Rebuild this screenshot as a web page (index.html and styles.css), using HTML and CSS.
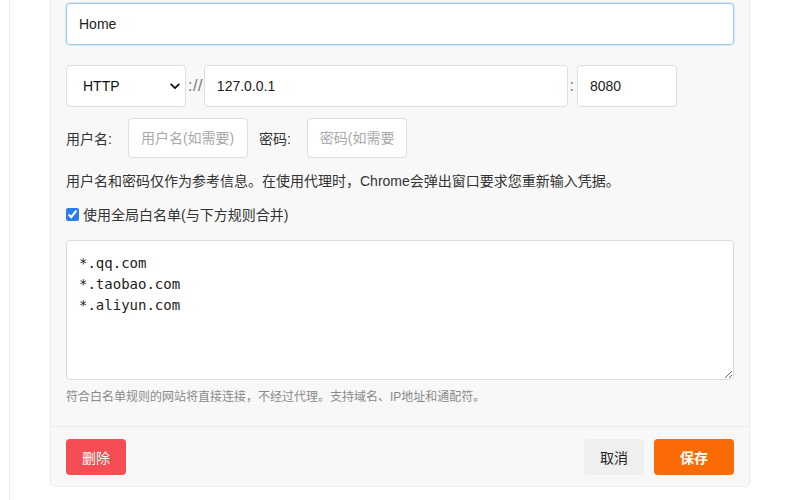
FILE: index.html
```html
<!DOCTYPE html>
<html lang="zh-CN">
<head>
<meta charset="utf-8">
<title>Proxy</title>
<link rel="stylesheet" href="styles.css">
</head>
<body>
<div class="page">
  <div class="panel">
    <div class="panel-body">
      <input class="input name-input" type="text" value="Home">

      <div class="row addr-row">
        <div class="select-wrap">
          <select class="select">
            <option>HTTP</option>
            <option>HTTPS</option>
            <option>SOCKS5</option>
          </select>
          <svg class="chevron" width="10" height="7" viewBox="0 0 10 7"><path d="M1.2 1.4 L5 5.2 L8.8 1.4" fill="none" stroke="#111" stroke-width="1.8" stroke-linecap="round" stroke-linejoin="round"/></svg>
        </div>
        <span class="sep sep-scheme">://</span>
        <input class="input host-input" type="text" value="127.0.0.1">
        <span class="sep sep-colon">:</span>
        <input class="input port-input" type="text" value="8080">
      </div>

      <div class="row auth-row">
        <label class="label user-label">用户名:</label>
        <input class="input user-input" type="text" placeholder="用户名(如需要)">
        <label class="label pass-label">密码:</label>
        <input class="input pass-input" type="password" placeholder="密码(如需要)">
      </div>

      <p class="helper">用户名和密码仅作为参考信息。在使用代理时，Chrome会弹出窗口要求您重新输入凭据。</p>

      <label class="check-row">
        <input class="check" type="checkbox" checked>
        <span>使用全局白名单(与下方规则合并)</span>
      </label>

      <textarea class="rules">*.qq.com
*.taobao.com
*.aliyun.com</textarea>

      <p class="hint">符合白名单规则的网站将直接连接，不经过代理。支持域名、IP地址和通配符。</p>
    </div>

    <div class="panel-footer">
      <button class="btn btn-danger">删除</button>
      <div class="footer-right">
        <button class="btn btn-cancel">取消</button>
        <button class="btn btn-save">保存</button>
      </div>
    </div>
  </div>
</div>
</body>
</html>
```

FILE: styles.css
```css
* { box-sizing: border-box; }

html, body {
  margin: 0;
  padding: 0;
  background: #ffffff;
  font-family: "Liberation Sans", "Noto Sans CJK SC", sans-serif;
  color: #333333;
  font-size: 14px;
}

.page {
  margin-left: 9px;
  border-left: 1px solid #ececec;
  height: 500px;
  padding-left: 40px;
}

.panel {
  width: 700px;
  background: #f8f8f8;
  border: 1px solid #ebebeb;
  border-top: none;
  border-radius: 0 0 5px 5px;
}

.panel-body {
  padding: 3px 15px 0 15px;
}

.input {
  display: block;
  font-family: "Liberation Sans", "Noto Sans CJK SC", sans-serif;
  font-size: 14px;
  color: #222;
  background: #fff;
  border: 1px solid #dedede;
  border-radius: 4px;
  padding: 0 12px;
  outline: none;
}

.input::placeholder { color: #a9a9a9; }

.name-input {
  width: 100%;
  height: 42px;
  border-color: #9ccdf1;
  box-shadow: 0 0 0 1px rgba(156, 205, 241, 0.4);
}

.row {
  display: flex;
  align-items: center;
}

.addr-row {
  margin-top: 20px;
  height: 42px;
}

.select-wrap {
  position: relative;
  width: 120px;
  height: 42px;
}

.select {
  appearance: none;
  -webkit-appearance: none;
  width: 100%;
  height: 100%;
  font-family: "Liberation Sans", "Noto Sans CJK SC", sans-serif;
  font-size: 14px;
  color: #111;
  background: #fff;
  border: 1px solid #dedede;
  border-radius: 4px;
  padding: 0 16px;
  outline: none;
}

.chevron {
  position: absolute;
  right: 6px;
  top: 18px;
  pointer-events: none;
}

.sep {
  color: #777;
  font-size: 16px;
}

.sep-scheme { margin: 0 1px 0 2px; letter-spacing: 0.5px; }
.sep-colon { margin: 0 3px 0 2px; }

.host-input {
  flex: 1;
  height: 42px;
}

.port-input {
  width: 100px;
  height: 42px;
  margin-right: 57px;
}

.auth-row {
  margin-top: 11px;
  height: 40px;
}

.label {
  font-size: 14px;
  color: #333;
}

.user-label { margin-right: 16px; }

.user-input {
  width: 120px;
  height: 40px;
  margin-right: 11px;
}

.pass-label { margin-right: 16px; }

.pass-input {
  width: 100px;
  height: 40px;
}

.helper {
  margin: 13px 0 0 0;
  line-height: 20px;
  font-size: 14px;
  color: #333;
}

.check-row {
  display: flex;
  align-items: center;
  margin-top: 13px;
  height: 20px;
  font-size: 14px;
  color: #333;
}

.check {
  width: 13px;
  height: 13px;
  margin: 0 4px 0 0;
  accent-color: #2b7de9;
}

.rules {
  display: block;
  width: 100%;
  height: 140px;
  margin-top: 16px;
  padding: 12px 12px;
  font-family: "DejaVu Sans Mono", monospace;
  font-size: 14px;
  line-height: 21px;
  color: #222;
  background: #fff;
  border: 1px solid #dcdcdc;
  border-radius: 4px;
  resize: vertical;
  outline: none;
}

.hint {
  margin: 8px 0 0 0;
  line-height: 18px;
  font-size: 12px;
  color: #8a8a8a;
}

.panel-footer {
  margin-top: 20px;
  border-top: 1px solid #ececec;
  padding: 12px 15px 11px 15px;
  display: flex;
  justify-content: space-between;
  align-items: center;
}

.footer-right {
  display: flex;
  gap: 10px;
}

.btn {
  height: 36px;
  border: none;
  border-radius: 4px;
  font-family: "Liberation Sans", "Noto Sans CJK SC", sans-serif;
  font-size: 14px;
  cursor: pointer;
}

.btn-danger {
  width: 60px;
  background: #f54d53;
  color: #fff;
}

.btn-cancel {
  width: 60px;
  background: #efefef;
  color: #222;
}

.btn-save {
  width: 80px;
  background: #fa6a05;
  color: #fff;
  font-weight: bold;
}
```
